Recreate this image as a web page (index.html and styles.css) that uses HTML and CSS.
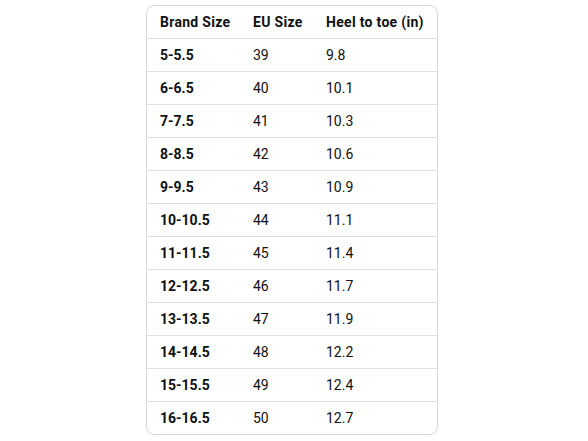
FILE: index.html
```html
<!DOCTYPE html>
<html>
<head>
<meta charset="utf-8">
<link rel="stylesheet" href="styles.css">
</head>
<body>
<div class="page">
  <div class="card">
    <table class="sizes">
      <thead>
        <tr><th>Brand Size</th><th>EU Size</th><th>Heel to toe (in)</th></tr>
      </thead>
      <tbody>
        <tr><td class="b">5-5.5</td><td>39</td><td>9.8</td></tr>
        <tr><td class="b">6-6.5</td><td>40</td><td>10.1</td></tr>
        <tr><td class="b">7-7.5</td><td>41</td><td>10.3</td></tr>
        <tr><td class="b">8-8.5</td><td>42</td><td>10.6</td></tr>
        <tr><td class="b">9-9.5</td><td>43</td><td>10.9</td></tr>
        <tr><td class="b">10-10.5</td><td>44</td><td>11.1</td></tr>
        <tr><td class="b">11-11.5</td><td>45</td><td>11.4</td></tr>
        <tr><td class="b">12-12.5</td><td>46</td><td>11.7</td></tr>
        <tr><td class="b">13-13.5</td><td>47</td><td>11.9</td></tr>
        <tr><td class="b">14-14.5</td><td>48</td><td>12.2</td></tr>
        <tr><td class="b">15-15.5</td><td>49</td><td>12.4</td></tr>
        <tr><td class="b">16-16.5</td><td>50</td><td>12.7</td></tr>
      </tbody>
    </table>
  </div>
</div>
</body>
</html>
```
FILE: styles.css
```css
html, body {
  margin: 0;
  padding: 0;
  background: #ffffff;
}
.page {
  padding: 5px 0 0 146px;
  font-family: Roboto, "Liberation Sans", Arial, sans-serif;
  color: #0f1111;
}
.card {
  width: 292px;
  box-sizing: border-box;
  border: 1px solid #d5d9d9;
  border-radius: 8px;
  overflow: hidden;
}
.sizes {
  width: 100%;
  border-collapse: collapse;
  font-size: 14px;
}
.sizes th, .sizes td {
  height: 32px;
  padding: 0 0 0 13px;
  text-align: left;
  vertical-align: middle;
  box-sizing: border-box;
}
.sizes th {
  font-weight: bold;
  letter-spacing: 0.3px;
}
.sizes tbody tr td {
  border-top: 1px solid #dfe2e2;
  height: 33px;
}
.sizes th:nth-child(1) { width: 93px; }
.sizes th:nth-child(2) { width: 73px; }
.sizes .b { font-weight: bold; }
```
